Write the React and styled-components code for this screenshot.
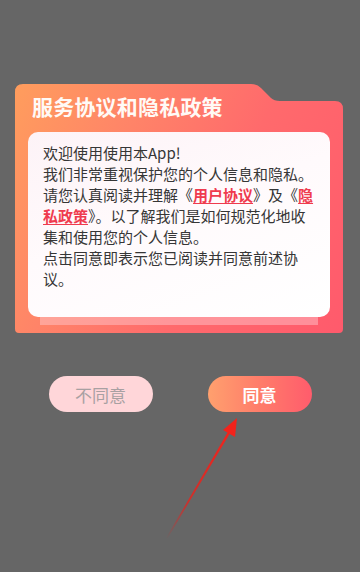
import React from 'react';
import styled, { createGlobalStyle } from 'styled-components';

const GlobalStyle = createGlobalStyle`
  html, body {
    margin: 0;
    padding: 0;
    background: #666666;
  }
  body {
    font-family: "Noto Sans CJK SC", "Noto Sans", sans-serif;
  }
`;

const Page = styled.div`
  position: relative;
  width: 360px;
  height: 572px;
  padding-top: 84px;
  box-sizing: border-box;
  overflow: hidden;
`;

const Card = styled.div`
  width: 328px;
  height: 249px;
  margin-left: 15px;
  box-sizing: border-box;
  padding: 10px 13px 0 13px;
  background: linear-gradient(115deg, #ff9d5d 0%, #ff8468 30%, #ff6a6c 60%, #ff5a6c 100%);
  clip-path: path('M0,8 Q0,0 8,0 L236,0 Q242,0 246,4 L256,14 Q259,17 265,17 L320,17 Q328,17 328,25 L328,245 Q328,249 324,249 L4,249 Q0,249 0,245 Z');
`;

const Title = styled.div`
  padding-left: 4px;
  font-size: 21px;
  line-height: 24px;
  font-weight: 700;
  color: #fffaf6;
  letter-spacing: 0.2px;
`;

const Sheet = styled.div`
  margin-top: 14px;
  height: 185px;
  box-sizing: border-box;
  padding: 10px 15px 0 15px;
  border-radius: 10px;
  background: linear-gradient(160deg, #fdf3f7 0%, #fffafc 45%, #ffffff 100%);
  box-shadow: 0 20px 0 -12px rgba(255, 205, 210, 0.45);
  font-size: 15px;
  line-height: 21px;
  color: #363636;
`;

const Para = styled.p`
  margin: 0;
`;

const Link = styled.span`
  color: #ef3b4e;
  font-weight: 700;
  text-decoration: underline;
  text-underline-offset: 2px;
`;

const ButtonRow = styled.div`
  display: flex;
  justify-content: center;
  gap: 55px;
  margin-top: 43px;
`;

const PillButton = styled.div`
  width: 104px;
  height: 36px;
  border-radius: 18px;
  display: flex;
  align-items: center;
  justify-content: center;
  font-size: 17px;
  cursor: pointer;
  color: ${(props) => (props.$primary ? '#ffffff' : '#a8a0a2')};
  font-weight: ${(props) => (props.$primary ? 700 : 400)};
  background: ${(props) =>
    props.$primary
      ? 'linear-gradient(90deg, #ffa06e 0%, #ff7c6a 50%, #ff5c6c 100%)'
      : '#ffd6d9'};
`;

const Arrow = styled.svg`
  position: absolute;
  left: 160px;
  top: 412px;
`;

const App = () => (
  <Page>
    <GlobalStyle />
    <Card>
      <Title>服务协议和隐私政策</Title>
      <Sheet>
        <Para>欢迎使用使用本App!</Para>
        <Para>
          我们非常重视保护您的个人信息和隐私。请您认真阅读并理解《<Link>用户协议</Link>》及《
          <Link>隐私政策</Link>》。以了解我们是如何规范化地收集和使用您的个人信息。
        </Para>
        <Para>点击同意即表示您已阅读并同意前述协议。</Para>
      </Sheet>
    </Card>
    <ButtonRow>
      <PillButton>不同意</PillButton>
      <PillButton $primary>同意</PillButton>
    </ButtonRow>
    <Arrow width="90" height="135" viewBox="0 0 90 135">
      <defs>
        <linearGradient id="ar" x1="0" y1="1" x2="1" y2="0">
          <stop offset="0" stopColor="#e02020" stopOpacity="0" />
          <stop offset="0.35" stopColor="#e8221c" stopOpacity="0.8" />
          <stop offset="1" stopColor="#f2231c" />
        </linearGradient>
      </defs>
      <polygon points="6,126 69,18 71,19.5 7.5,126.5" fill="url(#ar)" />
      <polygon points="77,6 75,25 63,18" fill="#f2231c" />
    </Arrow>
  </Page>
);

export default App;
